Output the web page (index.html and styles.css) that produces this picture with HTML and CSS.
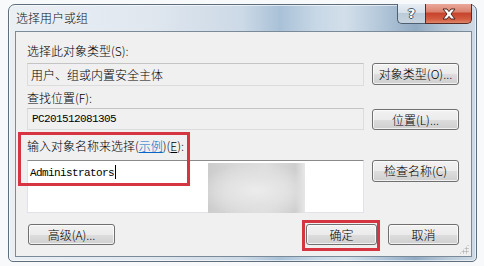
FILE: index.html
```
<!DOCTYPE html>
<html lang="zh-CN">
<head>
<meta charset="utf-8">
<title>选择用户或组</title>
<link rel="stylesheet" href="styles.css">
</head>
<body>
<div class="window">
  <div class="titlebar">
    <span class="title">选择用户或组</span>
    <div class="caption-btns">
      <div class="cbtn help"><span>?</span></div>
      <div class="cbtn close">
        <svg width="18" height="12" viewBox="0 0 18 12">
          <path d="M3 1 H7 L9 3.6 L11 1 H15 L11 6 L15 11 H11 L9 8.4 L7 11 H3 L7 6 Z" fill="#fff" stroke="#4a2520" stroke-width="1" stroke-linejoin="round"/>
        </svg>
      </div>
    </div>
  </div>
  <div class="client">
    <div class="label l1">选择此对象类型(S):</div>
    <div class="line l-field1">
      <div class="field readonly f1">用户、组或内置安全主体</div>
      <button class="btn wide b1">对象类型(O)...</button>
    </div>
    <div class="label l2">查找位置(F):</div>
    <div class="line l-field2">
      <div class="field readonly f2 mono">PC201512081305</div>
      <button class="btn wide b2">位置(L)...</button>
    </div>
    <div class="label l3">输入对象名称来选择(<a class="link">示例</a>)(<u>E</u>):</div>
    <div class="line l-field3">
      <div class="field edit f3">
        <span class="mono">Administrators</span><span class="caret"></span>
        <div class="blur"></div>
      </div>
      <button class="btn wide b3">检查名称(C)</button>
    </div>
    <div class="bottom">
      <button class="btn wide adv">高级(A)...</button>
      <div class="spacer"></div>
      <button class="btn small ok">确定</button>
      <button class="btn small cancel">取消</button>
    </div>
    <div class="grip"></div>
  </div>
</div>
<div class="mark mark1"></div>
<div class="mark mark2"></div>
</body>
</html>
```
FILE: styles.css
```
* { box-sizing: border-box; }
html, body { margin: 0; padding: 0; }
body {
  width: 484px;
  height: 266px;
  background: #f8f9fa;
  font-family: "Noto Sans CJK SC", "Liberation Sans", sans-serif;
  font-size: 12px;
  font-weight: 300;
  color: #000;
  position: relative;
  overflow: hidden;
}
.window {
  margin: 4px 0 0 8px;
  width: 469px;
  height: 258px;
  border: 1px solid #5f6e7c;
  border-radius: 7px 7px 5px 5px;
  background:
    linear-gradient(to right, #eaeff4 0%, #e0e7ef 30%, #ccd9e6 50%, #a9c1d7 58%, #c8d8e6 66%, #d2dfea 72%, #b2c6d9 80%, #91abc3 87%, #b9cad9 94%, #cfdae5 100%);
  display: flex;
  flex-direction: column;
  box-shadow: inset 0 0 0 1px rgba(255,255,255,0.6);
}
.titlebar {
  height: 26px;
  display: flex;
  justify-content: space-between;
  align-items: flex-start;
  padding: 0 4px 0 7px;
}
.title {
  margin-top: 5px;
  line-height: 16px;
  font-size: 12px;
  color: #111;
  text-shadow: 0 0 6px rgba(255,255,255,0.9);
}
.caption-btns {
  display: flex;
  margin-top: -1px;
}
.cbtn {
  height: 20px;
  display: flex;
  align-items: center;
  justify-content: center;
  border: 1px solid #4e5f70;
  border-top: none;
}
.help {
  width: 28px;
  border-radius: 0 0 0 5px;
  border-right: none;
  background: linear-gradient(#e8eef4 0%, #d6e0ea 45%, #bccbd9 50%, #c7d4e0 100%);
}
.help span {
  font-family: "DejaVu Sans", sans-serif;
  font-weight: bold;
  font-size: 13px;
  color: #fff;
  text-shadow: -1px 0 #47586a, 1px 0 #47586a, 0 -1px #47586a, 0 1px #47586a;
  line-height: 13px;
}
.close {
  width: 47px;
  border-color: #5a2b24;
  border-radius: 0 0 5px 0;
  background: linear-gradient(#eaa89b 0%, #dc8470 40%, #c8442c 50%, #d35c40 80%, #e0866a 100%);
}
.client {
  margin: 0 4px 4px 6px;
  height: 226px;
  border: 1px solid #7b8a99;
  background: #f0f0f0;
  padding: 12px 12px 0 11px;
  position: relative;
}
.label {
  line-height: 14px;
  height: 14px;
  white-space: nowrap;
}
.link {
  color: #0a64c8;
  text-decoration: underline;
}
.l2 { margin-top: 5px; }
.l3 { margin-top: 9px; }
.line {
  display: flex;
  gap: 8px;
  align-items: flex-start;
}
.l-field1 { margin-top: 5px; }
.l-field2 { margin-top: 3px; }
.l-field3 { margin-top: 7px; }
.field {
  width: 337px;
  flex: none;
  position: relative;
}
.readonly {
  background: #f0f0f0;
  border: 1px solid #dcdcdc;
  border-top-color: #c4c4c4;
  padding: 2px 3px;
  line-height: 17px;
}
.f1 { height: 23px; }
.f2 { height: 22px; }
.mono {
  font-family: "Liberation Mono", "DejaVu Sans Mono", monospace;
  font-size: 11px;
  letter-spacing: -0.6px;
  font-weight: normal;
}
.f2.mono { padding-left: 4px; line-height: 17px; }
.edit {
  height: 53px;
  background: #fff;
  border: 1px solid #e2e3ea;
  border-top-color: #8a8a8a;
  padding: 3px 0 0 2px;
  line-height: 14px;
}
.caret {
  display: inline-block;
  width: 1px;
  height: 14px;
  background: #000;
  vertical-align: -3px;
  margin-left: 1px;
}
.blur {
  position: absolute;
  left: 180px;
  top: 2px;
  width: 97px;
  height: 50px;
  background:
    radial-gradient(ellipse 60% 55% at 50% 55%, #ececec 0%, #e2e2e2 50%, rgba(225,225,225,0) 100%),
    linear-gradient(to right, #cccccc 0%, #d8d8d8 30%, #dddddd 60%, #cecece 90%, #e8e8e8 100%);
}
.btn {
  font-family: "Noto Sans CJK SC", "Liberation Sans", sans-serif;
  font-size: 12px;
  font-weight: 300;
  color: #000;
  border: 1px solid #707070;
  border-radius: 3px;
  background: linear-gradient(#f2f2f2 0%, #ebebeb 50%, #dddddd 51%, #cfcfcf 100%);
  box-shadow: inset 0 0 0 1px rgba(255,255,255,0.7);
  padding: 0;
  line-height: 18px;
  white-space: nowrap;
}
.wide { width: 87px; flex: none; }
.small { width: 71px; flex: none; }
.b1 { height: 22px; }
.b2 { height: 21px; margin-top: 1px; }
.b3 { height: 22px; }
.bottom {
  display: flex;
  align-items: flex-start;
  margin-top: 11px;
  padding-left: 1px;
}
.bottom .btn { height: 21px; }
.spacer { flex: 1; }
.cancel { margin-left: 11px; }
.grip {
  position: absolute;
  right: 2px;
  bottom: 2px;
  width: 10px;
  height: 10px;
  background-image: radial-gradient(circle, #b4b4b4 0.9px, transparent 1.2px);
  background-size: 3px 3px;
  clip-path: polygon(100% 0, 100% 100%, 0 100%);
}
.mark {
  position: absolute;
  border: 3px solid #d63440;
}
.mark1 { left: 18px; top: 132px; width: 172px; height: 54px; }
.mark2 { left: 302px; top: 220px; width: 78px; height: 31px; }
```
